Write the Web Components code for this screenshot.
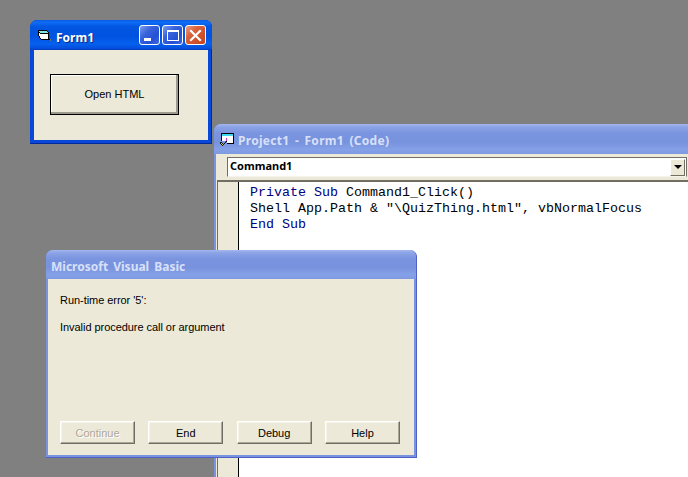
<!DOCTYPE html>
<html>
<head>
<meta charset="utf-8">
<style>
  html, body { margin: 0; height: 100%; overflow: hidden; background: #808080; }
</style>
</head>
<body>
<xp-desktop>
  <xp-window caption="Form1" icon="form" controls style="left:30px;top:20px;width:182px;height:124px">
    <form-body><xp-button default>Open HTML</xp-button></form-body>
  </xp-window>
  <xp-window caption="Project1 - Form1 (Code)" icon="code" inactive style="left:214px;top:124px;width:490px;height:370px;--caption-ls:.3px;--title-h:30px">
    <code-pane object="Command1">
      <code-line><b>Private Sub</b> Command1_Click()</code-line>
      <code-line>Shell App.Path &amp; "\QuizThing.html", vbNormalFocus</code-line>
      <code-line><b>End Sub</b></code-line>
    </code-pane>
  </xp-window>
  <xp-window caption="Microsoft Visual Basic" inactive style="left:46px;top:250px;width:371px;height:208px">
    <error-dialog>
      <span slot="message">Run-time error '5':</span>
      <span slot="message">Invalid procedure call or argument</span>
      <xp-button slot="actions" disabled>Continue</xp-button>
      <xp-button slot="actions">End</xp-button>
      <xp-button slot="actions">Debug</xp-button>
      <xp-button slot="actions">Help</xp-button>
    </error-dialog>
  </xp-window>
</xp-desktop>

<script>
const UI_FONT = `"Liberation Sans", sans-serif`;
const BOLD_FONT = `"Noto Sans", "Liberation Sans", sans-serif`;

const ICONS = {
  form: `<svg width="16" height="16" viewBox="0 0 16 16" shape-rendering="crispEdges">
    <path d="M1 1h9v1h1v1h1v7h1v1H4v-1H3V9H2V7H1z" fill="#000"/>
    <path d="M2 2h8v1h1v1H3V3H2z" fill="#7fe6e6"/>
    <path d="M2 4h1v3H2zM3 5h8v5H4V9H3z" fill="#fff"/>
    <path d="M13 10h1v2h-1z" fill="#777"/>
  </svg>`,
  code: `<svg width="16" height="16" viewBox="0 0 16 16" shape-rendering="crispEdges">
    <path d="M2 1h13v11H8v-1h6V4H3v5H2z" fill="#000"/>
    <path d="M3 2h11v2H3z" fill="#3fd8f0"/>
    <path d="M3 4h11v7H8V9H3z" fill="#fff"/>
    <path d="M1 10h2v1h1v1h1v-1h1v-1h1V8h1v2H7v1H6v1H5v1H4v1H3v-1H2v-1H1z" fill="#111"/>
    <path d="M6 9h1V6h1v3H7v1H6z" fill="#d030d0"/>
    <path d="M2 11h1v1h1v1H3v-1H2z" fill="#e8d840"/>
  </svg>`
};

class XpDesktop extends HTMLElement {
  constructor() {
    super();
    this.attachShadow({ mode: 'open' }).innerHTML = `
      <style>
        :host { display: block; position: relative; width: 688px; height: 477px; overflow: hidden; background: #808080; }
      </style>
      <slot></slot>`;
  }
}

class XpWindow extends HTMLElement {
  constructor() {
    super();
    this.attachShadow({ mode: 'open' });
  }

  connectedCallback() {
    const caption = this.getAttribute('caption') || '';
    const icon = ICONS[this.getAttribute('icon')] || '';
    const controls = this.hasAttribute('controls') ? `
      <span class="ctl"><i class="min"></i></span>
      <span class="ctl"><i class="max"></i></span>
      <span class="ctl close">
        <svg width="13" height="13" viewBox="0 0 13 13"><path d="M2 2l9 9M11 2l-9 9" stroke="#fff" stroke-width="2.2" stroke-linecap="square"/></svg>
      </span>` : '';

    this.shadowRoot.innerHTML = `
      <style>
        :host {
          position: absolute;
          display: flex;
          flex-direction: column;
          box-sizing: border-box;
          border-radius: 7px 7px 0 0;
          overflow: hidden;
          background: #0848d8;
          box-shadow: inset -1px -1px 0 #00289c;
          padding: 0 4px 4px;
        }
        :host([inactive]) { background: #7a93df; box-shadow: none; padding: 0 2px 2px; border-bottom: 1px solid #5060c8; border-right: 1px solid #5060c8; }
        .bar {
          flex: none;
          height: var(--title-h, 30px);
          margin: 0 -4px;
          padding: 0 6px 0 7px;
          display: flex;
          align-items: center;
          gap: 2px;
          font: bold 12px ${BOLD_FONT};
          word-spacing: 2px;
          letter-spacing: var(--caption-ls, 0);
          color: #fff;
          background: linear-gradient(#0a5be4 0, #0f6df5 8%, #0256e0 22%, #0053e0 55%, #0660ee 80%, #0250dd 94%, #0339b8 100%);
          text-shadow: 1px 1px 0 #0a2a90;
        }
        :host([inactive]) .bar {
          height: var(--title-h, 29px);
          margin: 0 -2px;
          padding-left: 5px;
          color: #d8e0f8;
          text-shadow: none;
          background: linear-gradient(#a4b8ee 0, #8ba3e6 10%, #7a94df 30%, #7893de 60%, #84a0e6 85%, #7f9ae2 100%);
        }
        .icon { display: flex; width: 16px; height: 16px; margin: 3px 1px 0 0; }
        :host([inactive]) .icon { margin-top: 2px; }
        .title { flex: 1; white-space: nowrap; padding-top: 4px; }
        :host([inactive]) .title { padding-top: 3px; }
        .ctl {
          box-sizing: border-box;
          flex: none;
          width: 21px; height: 20px;
          display: flex; align-items: center; justify-content: center;
          position: relative;
          border: 1px solid #fff;
          border-radius: 3px;
          background: linear-gradient(135deg, #7c9cf0 0, #3a64dc 35%, #2450d4 70%, #3f68e0 100%);
        }
        .ctl.close { background: linear-gradient(135deg, #eb9c84 0, #d9623c 35%, #cf4f28 70%, #c44420 100%); }
        .min { position: absolute; left: 4px; bottom: 3px; width: 7px; height: 3px; background: #fff; }
        .max { width: 12px; height: 11px; box-sizing: border-box; border: 1px solid #fff; border-top-width: 2px; }
        .body { flex: 1; min-height: 0; display: flex; flex-direction: column; background: #ece9d8; }
      </style>
      <div class="bar"><span class="icon" ${icon ? '' : 'style="display:none"'}>${icon}</span><span class="title">${caption}</span>${controls}</div>
      <div class="body"><slot></slot></div>`;
  }
}

class XpButton extends HTMLElement {
  constructor() {
    super();
    this.attachShadow({ mode: 'open' }).innerHTML = `
      <style>
        :host {
          display: flex;
          align-items: center;
          justify-content: center;
          box-sizing: border-box;
          width: 75px;
          height: 23px;
          background: #ece9d8;
          color: #000;
          font: 11px ${UI_FONT};
          border: 1px solid;
          border-color: #fff #716f64 #716f64 #fff;
          box-shadow: inset -1px -1px 0 #aca899, inset 1px 1px 0 #f5f3ea;
        }
        :host([disabled]) { color: #aca899; text-shadow: 1px 1px 0 #fff; }
        :host([default]) {
          width: 129px;
          height: 41px;
          padding-bottom: 1px;
          border: 1px solid #000;
          box-shadow: inset -2px -2px 0 #9d9a8c, inset 1px 1px 0 #fff;
        }
      </style>
      <slot></slot>`;
  }
}

class FormBody extends HTMLElement {
  constructor() {
    super();
    this.attachShadow({ mode: 'open' }).innerHTML = `
      <style>
        :host { display: block; flex: 1; padding: 24px 0 0 16px; }
      </style>
      <slot></slot>`;
  }
}

class CodePane extends HTMLElement {
  constructor() {
    super();
    this.attachShadow({ mode: 'open' });
  }

  connectedCallback() {
    this.shadowRoot.innerHTML = `
      <style>
        :host { display: flex; flex-direction: column; flex: 1; min-height: 0; }
        .objects { flex: none; height: 26px; box-sizing: border-box; padding: 3px 0 0 11px; }
        .combo {
          box-sizing: border-box;
          width: 460px;
          height: 20px;
          display: flex;
          align-items: center;
          justify-content: space-between;
          padding-left: 2px;
          padding-right: 1px;
          background: #fff;
          border-top: 1px solid #716f64;
          border-left: 1px solid #716f64;
          border-right: 1px solid #716f64;
          border-bottom: 1px solid #f5f3ea;
          font: bold 11px ${BOLD_FONT};
          color: #000;
        }
        .name { padding-bottom: 3px; }
        .arrow {
          box-sizing: border-box;
          flex: none;
          width: 15px; height: 17px;
          display: flex; align-items: center; justify-content: center;
          background: #ece9d8;
          border: 1px solid;
          border-color: #fff #716f64 #716f64 #fff;
        }
        .arrow::after {
          content: '';
          border: 4px solid transparent;
          border-top: 4px solid #000;
          border-bottom: 0;
        }
        .editor {
          flex: 1;
          display: flex;
          min-height: 0;
          margin-left: 1px;
          border-top: 2px solid #716f64;
          border-left: 1px solid #716f64;
        }
        .margin { flex: none; width: 20px; background: #ece9d8; border-right: 1px solid #000; }
        .code { flex: 1; background: #fff; padding: 3px 0 0 11px; }
      </style>
      <div class="objects">
        <div class="combo"><span class="name">${this.getAttribute('object')}</span><span class="arrow"></span></div>
      </div>
      <div class="editor">
        <div class="margin"></div>
        <div class="code"><slot></slot></div>
      </div>`;
  }
}

class CodeLine extends HTMLElement {
  constructor() {
    super();
    // no whitespace around the style: this host is white-space: pre
    this.attachShadow({ mode: 'open' }).innerHTML = `<style>
        :host {
          display: block;
          height: 16px;
          font: 13.33px/16px "Liberation Mono", monospace;
          color: #000;
          white-space: pre;
        }
        ::slotted(b) { font-weight: normal; color: #000080; }
      </style><slot></slot>`;
  }
}

class ErrorDialog extends HTMLElement {
  constructor() {
    super();
    this.attachShadow({ mode: 'open' }).innerHTML = `
      <style>
        :host {
          flex: 1;
          display: flex;
          flex-direction: column;
          justify-content: space-between;
          padding: 15px 14px 11px 12px;
          font: 11px ${UI_FONT};
          color: #000;
        }
        .messages { display: flex; flex-direction: column; gap: 15px; letter-spacing: -0.05px; }
        .actions { display: flex; justify-content: space-between; }
      </style>
      <div class="messages"><slot name="message"></slot></div>
      <div class="actions"><slot name="actions"></slot></div>`;
  }
}

customElements.define('xp-desktop', XpDesktop);
customElements.define('xp-window', XpWindow);
customElements.define('xp-button', XpButton);
customElements.define('form-body', FormBody);
customElements.define('code-pane', CodePane);
customElements.define('code-line', CodeLine);
customElements.define('error-dialog', ErrorDialog);
</script>
</body>
</html>
